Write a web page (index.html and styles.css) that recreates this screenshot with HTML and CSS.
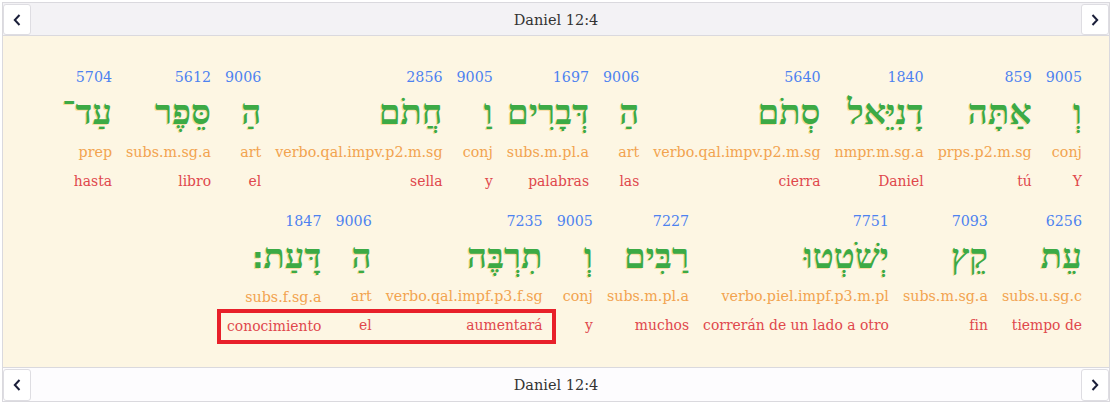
FILE: index.html
```html
<!DOCTYPE html>
<html lang="es">
<head>
  <meta charset="UTF-8">
  <title>Daniel 12:4</title>
  <link rel="stylesheet" href="styles.css">
</head>
<body>

  <div class="reader">

    <!-- barra superior -->
    <div class="nav-bar nav-top">
      <button class="nav-btn" title="Anterior">
        <svg width="8" height="12" viewBox="0 0 8 12"><path d="M6.5 1 L1.8 6 L6.5 11" /></svg>
      </button>
      <span class="ref">Daniel 12:4</span>
      <button class="nav-btn" title="Siguiente">
        <svg width="8" height="12" viewBox="0 0 8 12"><path d="M1.5 1 L6.2 6 L1.5 11" /></svg>
      </button>
    </div>

    <!-- texto interlineal -->
    <div class="verse">
      <div class="line" dir="rtl">
        <div class="word"><span class="num">9005</span><span class="heb">וְ</span><span class="morph">conj</span><span class="gloss">Y</span></div>
        <div class="word"><span class="num">859</span><span class="heb">אַתָּה</span><span class="morph">prps.p2.m.sg</span><span class="gloss">tú</span></div>
        <div class="word"><span class="num">1840</span><span class="heb">דָנִיֵּאל</span><span class="morph">nmpr.m.sg.a</span><span class="gloss">Daniel</span></div>
        <div class="word"><span class="num">5640</span><span class="heb">סְתֹם</span><span class="morph">verbo.qal.impv.p2.m.sg</span><span class="gloss">cierra</span></div>
        <div class="word"><span class="num">9006</span><span class="heb">הַ</span><span class="morph">art</span><span class="gloss">las</span></div>
        <div class="word"><span class="num">1697</span><span class="heb">דְּבָרִים</span><span class="morph">subs.m.pl.a</span><span class="gloss">palabras</span></div>
        <div class="word"><span class="num">9005</span><span class="heb">וַ</span><span class="morph">conj</span><span class="gloss">y</span></div>
        <div class="word"><span class="num">2856</span><span class="heb">חֲתֹם</span><span class="morph">verbo.qal.impv.p2.m.sg</span><span class="gloss">sella</span></div>
        <div class="word"><span class="num">9006</span><span class="heb">הַ</span><span class="morph">art</span><span class="gloss">el</span></div>
        <div class="word"><span class="num">5612</span><span class="heb">סֵּפֶר</span><span class="morph">subs.m.sg.a</span><span class="gloss">libro</span></div>
        <div class="word"><span class="num">5704</span><span class="heb">עַד־</span><span class="morph">prep</span><span class="gloss">hasta</span></div>
      </div>
      <div class="line" dir="rtl">
        <div class="word"><span class="num">6256</span><span class="heb">עֵת</span><span class="morph">subs.u.sg.c</span><span class="gloss">tiempo de</span></div>
        <div class="word"><span class="num">7093</span><span class="heb">קֵץ</span><span class="morph">subs.m.sg.a</span><span class="gloss">fin</span></div>
        <div class="word"><span class="num">7751</span><span class="heb">יְשֹׁטְטוּ</span><span class="morph">verbo.piel.impf.p3.m.pl</span><span class="gloss">correrán de un lado a otro</span></div>
        <div class="word"><span class="num">7227</span><span class="heb">רַבִּים</span><span class="morph">subs.m.pl.a</span><span class="gloss">muchos</span></div>
        <div class="word"><span class="num">9005</span><span class="heb">וְ</span><span class="morph">conj</span><span class="gloss">y</span></div>
        <!-- glosas resaltadas -->
        <div class="marked">
          <div class="word"><span class="num">7235</span><span class="heb">תִרְבֶּה</span><span class="morph">verbo.qal.impf.p3.f.sg</span><span class="gloss">aumentará</span></div>
          <div class="word"><span class="num">9006</span><span class="heb">הַ</span><span class="morph">art</span><span class="gloss">el</span></div>
          <div class="word"><span class="num">1847</span><span class="heb">דָּעַת<span class="sof">׃</span></span><span class="morph">subs.f.sg.a</span><span class="gloss">conocimiento</span></div>
        </div>
      </div>
    </div>

    <!-- barra inferior -->
    <div class="nav-bar nav-bottom">
      <button class="nav-btn" title="Anterior">
        <svg width="8" height="12" viewBox="0 0 8 12"><path d="M6.5 1 L1.8 6 L6.5 11" /></svg>
      </button>
      <span class="ref">Daniel 12:4</span>
      <button class="nav-btn" title="Siguiente">
        <svg width="8" height="12" viewBox="0 0 8 12"><path d="M1.5 1 L6.2 6 L1.5 11" /></svg>
      </button>
    </div>

  </div>

</body>
</html>
```

FILE: styles.css
```css
body { margin: 0; font-family: "DejaVu Serif", Georgia, serif; color: #333; }
.reader { margin: 2px; }

.nav-bar { display: grid; grid-template-columns: 28px 1fr 28px; align-items: stretch; height: 34px; box-sizing: border-box; border: 1px solid #dad9de; padding-top: 1px; }
.nav-top { background: #f3f2f5; }
.nav-bottom { background: #fdfcfe; border-top: none; }
.nav-btn { margin: 0; padding: 0; border: 1px solid #dedde2; border-radius: 3px; background: #fff; display: flex; align-items: center; justify-content: center; }
.nav-btn svg path { fill: none; stroke: #1b1f3a; stroke-width: 2; }
.ref { text-align: center; align-self: center; font-size: 14.5px; }

.verse { background: #fdf6e3; border: 1px solid #dad9de; border-top: none; padding: 29px 27px 15px; height: 332px; box-sizing: border-box; }
.line, .marked { display: flex; gap: 0 14px; }
.line { margin-bottom: 14px; }
.word { display: flex; flex-direction: column; text-align: right; }
.word span { display: block; white-space: nowrap; }
.word .sof { display: inline; font-family: "DejaVu Sans", sans-serif; font-size: 30px; }
.num, .morph, .gloss { direction: ltr; font-size: 14.25px; }
.num { color: #4d82f0; line-height: 24px; }
.heb { font-family: "Liberation Serif", "DejaVu Sans", serif; font-weight: bold; font-size: 35px; line-height: 48px; color: #3caa45; text-shadow: -1px 1px 0 rgba(240, 190, 80, 0.45); }
.morph { color: #f2a34f; line-height: 30px; }
.gloss { color: #e0474c; line-height: 28px; font-size: 13.9px; }

.marked { position: relative; }
.marked::after { content: ""; position: absolute; left: -10px; right: -13px; bottom: -4px; height: 35px; box-sizing: border-box; border: 4px solid #e8202a; }
```
